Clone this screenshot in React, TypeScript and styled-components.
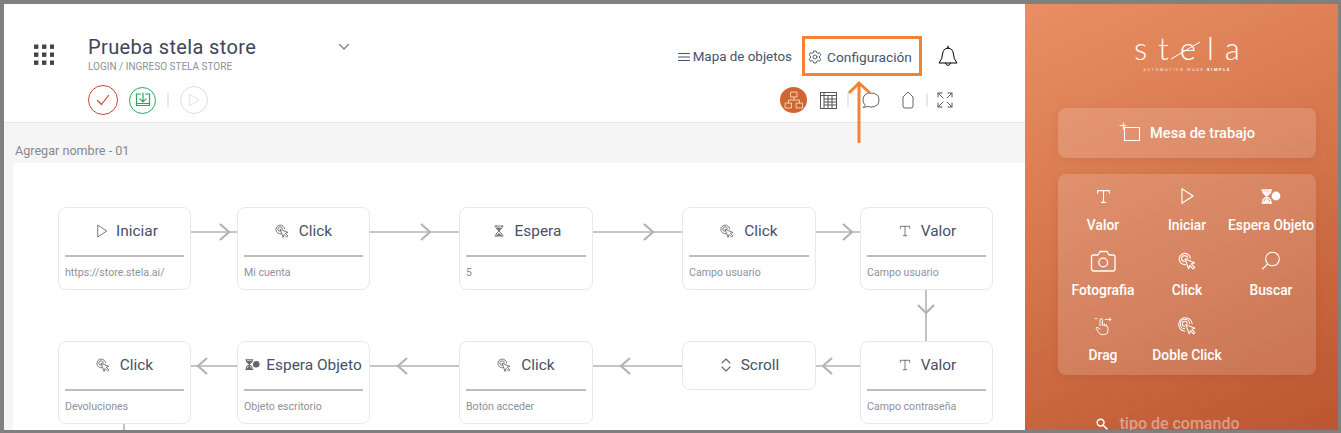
import React from 'react';
import styled, { createGlobalStyle } from 'styled-components';

const GlobalStyle = createGlobalStyle`
	html, body {
		margin: 0;
		padding: 0;
		background: #fff;
	}
	* {
		box-sizing: border-box;
	}
`;

const Shell = styled.div`
	display: flex;
	width: 1341px;
	height: 433px;
	overflow: hidden;
	position: relative;
	border: solid #808080;
	border-width: 4px 3px 3px 4px;
	font-family: 'Roboto', 'Liberation Sans', sans-serif;
`;

const Main = styled.main`
	display: flex;
	flex-direction: column;
	width: 1021px;
	flex-shrink: 0;
	background: #f5f5f5;
`;

const Header = styled.header`
	display: flex;
	justify-content: space-between;
	height: 119px;
	flex-shrink: 0;
	padding: 32px 66px 0 30px;
	background: #fff;
	border-bottom: 1px solid #e6e6e6;
`;

const Brand = styled.div`
	display: flex;
	align-items: flex-start;
	gap: 34px;
	padding-top: 8px;
`;

const TitleBlock = styled.div`
	display: flex;
	flex-direction: column;
	width: 262px;
	margin-top: -9px;
`;

const TitleRow = styled.div`
	display: flex;
	justify-content: space-between;
	align-items: center;
	height: 24px;
	color: #808080;
`;

const Title = styled.h1`
	margin: 0;
	font-size: 20px;
	font-weight: 400;
	letter-spacing: 0.37px;
	color: #3d4656;
`;

const Subtitle = styled.div`
	margin-top: 2px;
	font-size: 10px;
	line-height: 12px;
	color: #8b919c;
	text-transform: uppercase;
`;

const Actions = styled.div`
	display: flex;
	align-items: center;
	margin-top: 12px;
	gap: 11px;
`;

const RoundAction = styled.button<{ $color: string; $size: number }>`
	display: flex;
	align-items: center;
	justify-content: center;
	width: ${(props) => props.$size}px;
	height: ${(props) => props.$size}px;
	padding: 0;
	border-radius: 50%;
	background: transparent;
	border: 1.3px solid ${(props) => props.$color};
	color: ${(props) => props.$color};
`;

const Separator = styled.span`
	width: 2px;
	height: 14px;
	background: #e8e8e8;
`;

const Tools = styled.div`
	display: flex;
	flex-direction: column;
	align-items: flex-end;
`;

const TopTools = styled.div`
	display: flex;
	align-items: center;
`;

const MapLink = styled.a`
	display: flex;
	align-items: center;
	gap: 3px;
	margin-right: 10px;
	padding-top: 1px;
	font-size: 13.4px;
	color: #47536b;
`;

const ConfigLink = styled.a`
	display: flex;
	align-items: center;
	justify-content: center;
	gap: 5px;
	width: 120px;
	height: 40px;
	margin-right: 15px;
	padding: 1px 4px 0 0;
	border: 3px solid #f58233;
	font-size: 13.7px;
	color: #47536b;
`;

const ViewTools = styled.div`
	display: flex;
	align-items: center;
	height: 26px;
	margin-top: 11px;
	margin-right: 6px;
	color: #555;
`;

const ActiveView = styled.span`
	display: flex;
	align-items: center;
	justify-content: center;
	width: 27px;
	height: 26px;
	border-radius: 50%;
	background: #cf6632;
	color: #f5d9c8;
`;

const ViewSlot = styled.span<{ $left: number }>`
	display: flex;
	margin-left: ${(props) => props.$left}px;
`;

const Canvas = styled.section`
	display: flex;
	flex-direction: column;
	flex: 1;
	min-height: 0;
	padding-left: 9px;
`;

const CanvasLabel = styled.div`
	height: 40px;
	padding: 21px 0 0 2px;
	font-size: 12.6px;
	line-height: 14px;
	color: #85898f;
`;

const Board = styled.div`
	flex: 1;
	display: flex;
	flex-direction: column;
	padding: 44px 0 0 45px;
	background: #fff;
	overflow: hidden;
`;

const FlowRow = styled.div`
	display: flex;
	align-items: flex-start;
`;

const Node = styled.article<{ $w: number }>`
	width: ${(props) => props.$w}px;
	flex-shrink: 0;
	background: #fff;
	border: 1.3px solid #e8e8e8;
	border-radius: 8px;
`;

const NodeHead = styled.div<{ $gap: number; $shift: number }>`
	display: flex;
	align-items: center;
	justify-content: center;
	gap: ${(props) => props.$gap}px;
	height: 47px;
	padding: 0 0 2px ${(props) => props.$shift}px;
	font-size: 15.4px;
	color: #465066;
`;

const NodeIcon = styled.span`
	display: flex;
	color: #666;
`;

const NodeBody = styled.div`
	margin: 0 6px;
	height: 34px;
	padding: 10px 0 0;
	border-top: 2px solid #bcbcbc;
	font-size: 10.6px;
	line-height: 12px;
	color: #8d929a;
`;

const LinkBox = styled.div<{ $w: number }>`
	display: flex;
	flex-shrink: 0;
	width: ${(props) => props.$w}px;
	height: 24px;
	margin-top: 12px;
`;

const VerticalLink = styled.div<{ $left: number; $h: number }>`
	display: flex;
	width: 20px;
	height: ${(props) => props.$h}px;
	flex-shrink: 0;
	margin-left: ${(props) => props.$left}px;
`;

const AnnotationArrow = styled.svg`
	position: absolute;
	left: 840px;
	top: 74px;
`;

const Panel = styled.aside`
	flex: 1;
	display: flex;
	flex-direction: column;
	align-items: center;
	padding-top: 26px;
	padding-left: 11px;
	background: linear-gradient(155deg, #e98e64 0%, #d87a50 40%, #bb5630 100%);
	color: #fff;

	& > * {
		flex-shrink: 0;
	}
`;

const Logo = styled.div`
	position: relative;
	font-family: 'Lato', sans-serif;
	font-weight: 300;
	font-size: 31px;
	line-height: 37px;
	letter-spacing: 11px;
	margin-right: -11px;
`;

const LogoSlash = styled.svg`
	position: absolute;
	left: 35px;
	top: 10px;
`;

const Tagline = styled.div`
	font-size: 4px;
	line-height: 6px;
	letter-spacing: 1.6px;
	color: rgba(255, 255, 255, 0.8);
	strong {
		color: #fff;
	}
`;

const WorkButton = styled.div`
	display: flex;
	align-items: center;
	justify-content: center;
	gap: 9px;
	width: 258px;
	height: 50px;
	margin-top: 35px;
	padding-bottom: 1px;
	border-radius: 8px;
	background: rgba(255, 255, 255, 0.15);
	box-shadow: 0 2px 8px rgba(120, 50, 20, 0.1);
	font-size: 14.6px;
	font-weight: 500;
`;

const ToolCard = styled.div`
	display: grid;
	grid-template-columns: repeat(3, 84px);
	grid-auto-rows: 65px;
	justify-content: center;
	width: 258px;
	height: 201px;
	margin-top: 16px;
	padding-top: 8px;
	border-radius: 8px;
	background: rgba(255, 255, 255, 0.15);
	box-shadow: 0 2px 8px rgba(120, 50, 20, 0.1);
`;

const ToolItem = styled.div`
	display: flex;
	flex-direction: column;
	align-items: center;
	font-size: 13.8px;
	font-weight: 500;
	white-space: nowrap;
`;

const ToolGlyph = styled.span`
	display: flex;
	align-items: center;
	justify-content: center;
	height: 28px;
	margin-bottom: 7px;
`;

const SearchRow = styled.div`
	display: flex;
	align-items: center;
	gap: 11px;
	margin-top: 39px;
	margin-right: 38px;
	font-size: 16px;
	font-weight: 500;
	color: rgba(255, 255, 255, 0.42);

	svg {
		color: #fff;
	}
`;

type IconProps = { size?: number };

const Svg = ({ size = 16, vb = 16, sw = 1, children }: { size?: number; vb?: number; sw?: number; children: React.ReactNode }) => (
	<svg width={size} height={size} viewBox={`0 0 ${vb} ${vb}`} fill='none' stroke='currentColor' strokeWidth={sw} strokeLinecap='round' strokeLinejoin='round'>
		{children}
	</svg>
);

const PlayIcon = ({ size = 14 }: IconProps) => (
	<Svg size={size}>
		<path d='M3.5 1.5 L13.5 8 L3.5 14.5 Z' />
	</Svg>
);

const ClickIcon = ({ size = 14 }: IconProps) => (
	<Svg size={size} sw={1}>
		<path d='M6.6 11.2 A5 5 0 1 1 11 5.6' />
		<path d='M5.6 8.4 A2.6 2.6 0 1 1 8.4 5.6' />
		<path d='M6.2 6.2 L14.8 9.6 L11.8 10.6 L14.8 13.6 L13.4 15 L10.4 12 L9.4 15 Z' />
	</Svg>
);

const DoubleClickIcon = ({ size = 16 }: IconProps) => (
	<Svg size={size} sw={0.9}>
		<path d='M6 12.6 A6 6 0 1 1 12.6 6' />
		<path d='M6 10.4 A4.2 4.2 0 1 1 10.4 6' />
		<path d='M6 8.2 A2.2 2.2 0 1 1 8.2 6' />
		<path d='M6.8 6.8 L15 10 L12.2 11 L15 13.8 L13.8 15 L11 12.2 L10 15 Z' />
	</Svg>
);

const HourglassIcon = ({ size = 12 }: IconProps) => (
	<Svg size={size} vb={12} sw={0.9}>
		<path d='M2 1 H10 M2 11 H10 M3 1 V3 L9 9 V11 M9 1 V3 L3 9 V11' />
		<path d='M4.5 3 H7.5 L6 5 Z M4.5 10 L6 8.4 L7.5 10 Z' fill='currentColor' />
	</Svg>
);

const WaitObjectIcon = ({ size = 20 }: IconProps) => (
	<svg width={size} height={size * 0.75} viewBox='0 0 20 15' fill='none' stroke='currentColor' strokeWidth='1.4'>
		<path d='M0.5 1 H11 M0.5 14 H11 M2 1 V3.5 L9.5 11 V14 M9.5 1 V3.5 L2 11 V14' />
		<path d='M3.5 3 H8 L5.7 6 Z M3.5 13 L5.7 10 L8 13 Z' fill='currentColor' />
		<circle cx='15' cy='7' r='4.4' fill='currentColor' stroke='none' />
	</svg>
);

const TextIcon = ({ size = 12 }: IconProps) => (
	<Svg size={size} vb={14} sw={1}>
		<path d='M1.5 4 V1.5 H12.5 V4 M7 1.5 V12.5 M5 12.5 H9' />
	</Svg>
);

const ScrollIcon = () => (
	<Svg size={14} vb={14} sw={1.1}>
		<path d='M3 5 L7 1 L11 5 M3 9 L7 13 L11 9' />
	</Svg>
);

const CameraIcon = () => (
	<Svg size={26} vb={26} sw={1.3}>
		<path d='M3.5 7 H8 L10 3.5 H17 L19 7 H23 Q25 7 25 9 V21 Q25 23 23 23 H3.5 Q1.5 23 1.5 21 V9 Q1.5 7 3.5 7 Z' />
		<circle cx='13.2' cy='14.5' r='4.4' />
	</Svg>
);

const SearchGlassIcon = () => (
	<Svg size={20} vb={20} sw={1.1}>
		<circle cx='11.5' cy='8' r='6.8' />
		<path d='M6.6 12.8 L1.6 18' />
	</Svg>
);

const DragIcon = () => (
	<Svg size={20} vb={20} sw={0.9}>
		<path d='M7 10 V4 Q7 2.6 8.2 2.6 Q9.4 2.6 9.4 4 V9 L13.6 10 Q15 10.4 15 12 V15 Q15 18.6 11 18.6 H9 Q6.8 18.6 5.6 16.4 L3.2 12.6 Q2.8 11.4 4 11.2 L7 13' />
		<path d='M9.4 7 V9 M11.4 7.8 V9.6 M13.4 8.4 V10' />
		<path d='M4 2.6 H2 M12 3.4 H18 M16.4 1.8 L18 3.4 L16.4 5' />
	</Svg>
);

const CropIcon = () => (
	<Svg size={22} vb={22} sw={1.1}>
		<path d='M1 3.5 H7' />
		<path d='M4.5 1 V7' />
		<rect x='5.5' y='5.5' width='15' height='13' />
	</Svg>
);

const CheckIcon = () => (
	<Svg size={16} sw={1.2}>
		<path d='M2.5 8.5 L6.5 12.5 L13.5 3.5' />
	</Svg>
);

const SaveIcon = () => (
	<Svg size={16} sw={1.2}>
		<path d='M5.5 2 H1.5 V13.5 H14.5 V2 H10.5' />
		<path d='M8 1 V9.5 M5 6.8 L8 9.8 L11 6.8' />
		<path d='M1.5 11.5 H14.5' />
	</Svg>
);

const AppGridIcon = () => (
	<svg width='20' height='21' viewBox='0 0 20 21' fill='#444'>
		{[0, 8, 16].map((y) => [0, 8, 16].map((x) => <rect key={`${x}-${y}`} x={x} y={y + 0.5} width='4.4' height='4.4' />))}
	</svg>
);

const ChevronIcon = () => (
	<Svg size={12} vb={12} sw={1.4}>
		<path d='M1.5 3.5 L6 8 L10.5 3.5' />
	</Svg>
);

const MenuIcon = () => (
	<Svg size={12} vb={12} sw={1.1}>
		<path d='M0.5 2.5 H11.5 M0.5 6 H11.5 M0.5 9.5 H11.5' />
	</Svg>
);

const GearIcon = () => (
	<Svg size={14} vb={14} sw={0.9}>
		<circle cx='7' cy='7' r='2' />
		<path d='M5.8 1 H8.2 L8.6 2.6 L9.9 3.3 L11.5 2.7 L12.8 4.9 L11.5 6 V8 L12.8 9.1 L11.5 11.3 L9.9 10.7 L8.6 11.4 L8.2 13 H5.8 L5.4 11.4 L4.1 10.7 L2.5 11.3 L1.2 9.1 L2.5 8 V6 L1.2 4.9 L2.5 2.7 L4.1 3.3 L5.4 2.6 Z' />
	</Svg>
);

const BellIcon = () => (
	<Svg size={22} vb={22} sw={1}>
		<path d='M11 1 V3 M11 3 Q6 3.4 5.6 9 Q5.4 14 2 18 H20 Q16.6 14 16.4 9 Q16 3.4 11 3 Z' />
		<path d='M8.6 18 Q9 20.4 11 20.4 Q13 20.4 13.4 18' />
	</Svg>
);

const FlowIcon = () => (
	<Svg size={20} vb={20} sw={0.9}>
		<rect x='7' y='2' width='6' height='5' />
		<rect x='1.5' y='13' width='6' height='5' />
		<rect x='12.5' y='13' width='6' height='5' />
		<path d='M10 7 V10 M4.5 13 V10 H15.5 V13' />
	</Svg>
);

const TableIcon = () => (
	<svg width='17' height='17' viewBox='0 0 17 17' fill='none' stroke='#555' strokeWidth='1'>
		<rect x='0.5' y='0.5' width='16' height='16' />
		<path d='M0.5 3.5 H16.5 M4 7 H16.5 M4 10 H16.5 M4 13 H16.5 M4 0.5 V16.5 M8 3.5 V16.5 M12 3.5 V16.5' />
	</svg>
);

const CommentIcon = () => (
	<Svg size={18} vb={18} sw={0.9}>
		<path d='M3 14 Q1 12 1 9 Q1 2 9 2 Q17 2 17 9 Q17 16 9 16 Q7 16 6 15.4 L1.5 16.5 Z' />
	</Svg>
);

const TagIcon = () => (
	<svg width='12' height='18' viewBox='0 0 12 18' fill='none' stroke='currentColor' strokeWidth='0.9'>
		<path d='M1 6 L6 1 L11 6 V15 Q11 17 9 17 H3 Q1 17 1 15 Z' />
	</svg>
);

const ExpandIcon = () => (
	<Svg size={16} sw={1}>
		<path d='M1 1 L6 6 M1 5 V1 H5 M15 1 L10 6 M11 1 H15 V5 M1 15 L6 10 M1 11 V15 H5 M15 15 L10 10 M15 11 V15 H11' />
	</Svg>
);

const SmallSearchIcon = () => (
	<Svg size={12} vb={12} sw={1.5}>
		<circle cx='4.6' cy='4.6' r='3.4' />
		<path d='M7.2 7.2 L11 11' />
	</Svg>
);

function Link({ width, back = false }: { width: number; back?: boolean }) {
	const inset = width > 60 ? 29 : 8;
	const tip = back ? inset - 1 : width - inset;
	const arm = back ? tip + 9 : tip - 9;
	return (
		<LinkBox $w={width}>
			<svg width={width} height='24' viewBox={`0 0 ${width} 24`} fill='none' stroke='#b3b3b3'>
				<path d={`M0 13 H${width}`} strokeWidth='1.6' />
				<path d={`M${arm} 5 L${tip} 13 L${arm} 21`} strokeWidth='2.2' />
			</svg>
		</LinkBox>
	);
}

function DownLink({ left, height, arrow = false }: { left: number; height: number; arrow?: boolean }) {
	return (
		<VerticalLink $left={left} $h={height}>
			<svg width='20' height={height} viewBox={`0 0 20 ${height}`} fill='none' stroke='#b3b3b3'>
				<path d={`M10 0 V${height}`} strokeWidth='1.6' />
				{arrow && <path d='M2 15 L10 23 L18 15' strokeWidth='2.2' />}
			</svg>
		</VerticalLink>
	);
}

type FlowNodeProps = {
	icon: React.ReactNode;
	title: string;
	caption?: string;
	gap?: number;
	width?: number;
	shift?: number;
};

function FlowNode({ icon, title, caption, gap = 10, width = 133, shift = 0 }: FlowNodeProps) {
	return (
		<Node $w={width}>
			<NodeHead $gap={gap} $shift={shift}>
				<NodeIcon>{icon}</NodeIcon>
				{title}
			</NodeHead>
			{caption && <NodeBody>{caption}</NodeBody>}
		</Node>
	);
}

const toolItems: { label: string; icon: React.ReactNode }[] = [
	{ label: 'Valor', icon: <TextIcon size={15} /> },
	{ label: 'Iniciar', icon: <PlayIcon size={18} /> },
	{ label: 'Espera Objeto', icon: <WaitObjectIcon size={20} /> },
	{ label: 'Fotografia', icon: <CameraIcon /> },
	{ label: 'Click', icon: <ClickIcon size={18} /> },
	{ label: 'Buscar', icon: <SearchGlassIcon /> },
	{ label: 'Drag', icon: <DragIcon /> },
	{ label: 'Doble Click', icon: <DoubleClickIcon size={18} /> },
];

function App() {
	return (
		<>
			<GlobalStyle />
			<Shell>
				<Main>
					<Header>
						<Brand>
							<AppGridIcon />
							<TitleBlock>
								<TitleRow>
									<Title>Prueba stela store</Title>
									<ChevronIcon />
								</TitleRow>
								<Subtitle>Login / Ingreso Stela Store</Subtitle>
								<Actions>
									<RoundAction $color='#c9482c' $size={30}>
										<CheckIcon />
									</RoundAction>
									<RoundAction $color='#27a85a' $size={27}>
										<SaveIcon />
									</RoundAction>
									<Separator />
									<RoundAction $color='#dcdcdc' $size={28}>
										<PlayIcon />
									</RoundAction>
								</Actions>
							</TitleBlock>
						</Brand>
						<Tools>
							<TopTools>
								<MapLink>
									<MenuIcon />
									Mapa de objetos
								</MapLink>
								<ConfigLink>
									<GearIcon />
									Configuración
								</ConfigLink>
								<BellIcon />
							</TopTools>
							<ViewTools>
								<ActiveView>
									<FlowIcon />
								</ActiveView>
								<ViewSlot $left={13}>
									<TableIcon />
								</ViewSlot>
								<ViewSlot $left={10}>
									<Separator />
								</ViewSlot>
								<ViewSlot $left={13}>
									<CommentIcon />
								</ViewSlot>
								<ViewSlot $left={22}>
									<TagIcon />
								</ViewSlot>
								<ViewSlot $left={12}>
									<Separator />
								</ViewSlot>
								<ViewSlot $left={9}>
									<ExpandIcon />
								</ViewSlot>
							</ViewTools>
						</Tools>
					</Header>
					<Canvas>
						<CanvasLabel>Agregar nombre - 01</CanvasLabel>
						<Board>
							<FlowRow>
								<FlowNode icon={<PlayIcon />} title='Iniciar' caption='https://store.stela.ai/' gap={7} shift={4} />
								<Link width={46} />
								<FlowNode icon={<ClickIcon />} title='Click' caption='Mi cuenta' />
								<Link width={89} />
								<FlowNode icon={<HourglassIcon />} title='Espera' caption='5' width={134} shift={2} />
								<Link width={89} />
								<FlowNode icon={<ClickIcon />} title='Click' caption='Campo usuario' width={134} />
								<Link width={44} />
								<FlowNode icon={<TextIcon />} title='Valor' caption='Campo usuario' shift={2} />
							</FlowRow>
							<DownLink left={858} height={51} arrow />
							<FlowRow>
								<FlowNode icon={<ClickIcon />} title='Click' caption='Devoluciones' />
								<Link width={46} back />
								<FlowNode icon={<WaitObjectIcon size={15} />} title='Espera Objeto' caption='Objeto escritorio' gap={6} />
								<Link width={89} back />
								<FlowNode icon={<ClickIcon />} title='Click' caption='Botón acceder' width={134} />
								<Link width={89} back />
								<FlowNode icon={<ScrollIcon />} title='Scroll' gap={8} width={134} />
								<Link width={44} back />
								<FlowNode icon={<TextIcon />} title='Valor' caption='Campo contraseña' shift={2} />
							</FlowRow>
							<DownLink left={56} height={10} />
						</Board>
					</Canvas>
				</Main>
				<Panel>
					<Logo>
						stela
						<LogoSlash width='34' height='24' viewBox='0 0 34 24' fill='none' stroke='#fff' strokeWidth='1'>
							<path d='M2 19 L31 2' />
						</LogoSlash>
					</Logo>
					<Tagline>
						AUTOMATION MADE <strong>SIMPLE</strong>
					</Tagline>
					<WorkButton>
						<CropIcon />
						Mesa de trabajo
					</WorkButton>
					<ToolCard>
						{toolItems.map((item) => (
							<ToolItem key={item.label}>
								<ToolGlyph>{item.icon}</ToolGlyph>
								{item.label}
							</ToolItem>
						))}
					</ToolCard>
					<SearchRow>
						<SmallSearchIcon />
						tipo de comando
					</SearchRow>
				</Panel>
				<AnnotationArrow width='40' height='72' viewBox='0 0 40 72' fill='none' stroke='#f58233' strokeWidth='3'>
					<path d='M15 5 V65 M5 15 L15 5 L26 15' />
				</AnnotationArrow>
			</Shell>
		</>
	);
}

export default App;
